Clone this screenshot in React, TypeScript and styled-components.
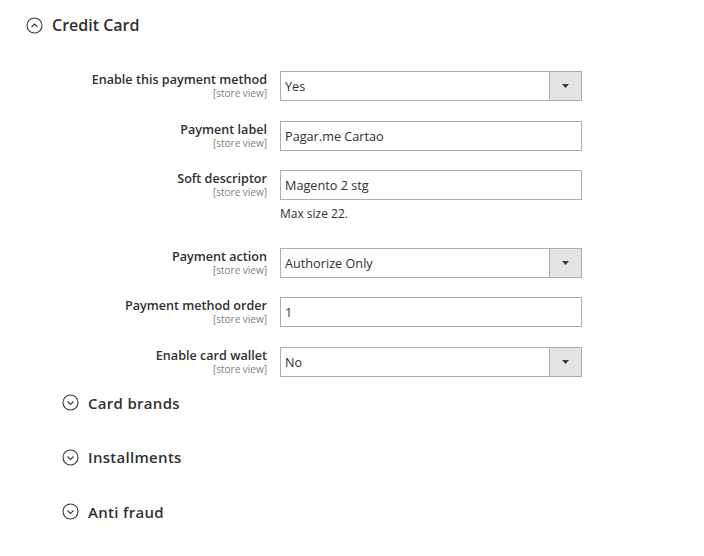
import React from 'react';
import styled, { createGlobalStyle } from 'styled-components';

const GlobalStyle = createGlobalStyle`
    body {
        margin: 0;
        background: #ffffff;
        font-family: 'Open Sans', 'Liberation Sans', sans-serif;
        color: #303030;
    }
`;

const Page = styled.div`
    width: 704px;
    height: 556px;
    box-sizing: border-box;
    padding: 16px 0 0 26px;
`;

const SectionHead = styled.div<{ $size: number; $spacing: number }>`
    display: flex;
    align-items: center;
    gap: 9px;
    height: 18px;
    font-size: ${(p) => p.$size}px;
    font-weight: 600;
    letter-spacing: ${(p) => p.$spacing}px;
    color: #303030;
`;

const Fields = styled.div`
    display: flex;
    flex-direction: column;
    gap: 19.5px;
    padding-top: 37px;
`;

const Row = styled.div`
    display: flex;
    align-items: flex-start;
    gap: 13px;
`;

const LabelCol = styled.div`
    width: 241px;
    text-align: right;
    padding-top: 1px;
`;

const Label = styled.div`
    font-size: 12.6px;
    font-weight: 600;
    line-height: 16px;
`;

const Scope = styled.div`
    font-size: 10px;
    line-height: 11px;
    color: #808080;
`;

const Control = styled.div`
    display: flex;
    flex-direction: column;
    width: 302px;
`;

const Box = styled.div`
    display: flex;
    align-items: center;
    height: 30px;
    box-sizing: border-box;
    border: 1px solid #adadad;
    background: #ffffff;
    font-size: 12.7px;
    color: #303030;
`;

const Value = styled.span`
    flex: 1;
    padding-left: 4px;
`;

const Arrow = styled.span`
    display: flex;
    align-items: center;
    justify-content: center;
    width: 31px;
    height: 100%;
    background: #e3e3e3;
    border-left: 1px solid #adadad;
`;

const Note = styled.div`
    font-size: 12px;
    line-height: 17px;
    color: #303030;
    margin-top: 5px;
    margin-bottom: 6px;
`;

const Groups = styled.div`
    display: flex;
    flex-direction: column;
    gap: 36.5px;
    padding: 17px 0 0 36px;
`;

const CircleIcon = ({ up }: { up?: boolean }) => (
    <svg width="17" height="17" viewBox="0 0 17 17">
        <circle cx="8.5" cy="8.5" r="7.5" fill="none" stroke="#41362f" strokeWidth="1.1" />
        <path
            d={up ? 'M5.5 10 L8.5 7 L11.5 10' : 'M5.5 7.5 L8.5 10.5 L11.5 7.5'}
            fill="none"
            stroke="#41362f"
            strokeWidth="1.1"
        />
    </svg>
);

type Field = {
    label: string;
    value: string;
    select?: boolean;
    note?: string;
};

const fields: Field[] = [
    { label: 'Enable this payment method', value: 'Yes', select: true },
    { label: 'Payment label', value: 'Pagar.me Cartao' },
    { label: 'Soft descriptor', value: 'Magento 2 stg', note: 'Max size 22.' },
    { label: 'Payment action', value: 'Authorize Only', select: true },
    { label: 'Payment method order', value: '1' },
    { label: 'Enable card wallet', value: 'No', select: true }
];

const groups = ['Card brands', 'Installments', 'Anti fraud'];

export default function App() {
    return (
        <Page>
            <GlobalStyle />
            <SectionHead $size={16} $spacing={0}>
                <CircleIcon up />
                Credit Card
            </SectionHead>

            <Fields>
                {fields.map((f) => (
                    <Row key={f.label}>
                        <LabelCol>
                            <Label>{f.label}</Label>
                            <Scope>[store view]</Scope>
                        </LabelCol>
                        <Control>
                            <Box>
                                <Value>{f.value}</Value>
                                {f.select && (
                                    <Arrow>
                                        <svg width="7" height="4" viewBox="0 0 7 4">
                                            <path d="M0 0 L7 0 L3.5 4 Z" fill="#41362f" />
                                        </svg>
                                    </Arrow>
                                )}
                            </Box>
                            {f.note && <Note>{f.note}</Note>}
                        </Control>
                    </Row>
                ))}
            </Fields>

            <Groups>
                {groups.map((g) => (
                    <SectionHead key={g} $size={15} $spacing={0.3}>
                        <CircleIcon />
                        {g}
                    </SectionHead>
                ))}
            </Groups>
        </Page>
    );
}
